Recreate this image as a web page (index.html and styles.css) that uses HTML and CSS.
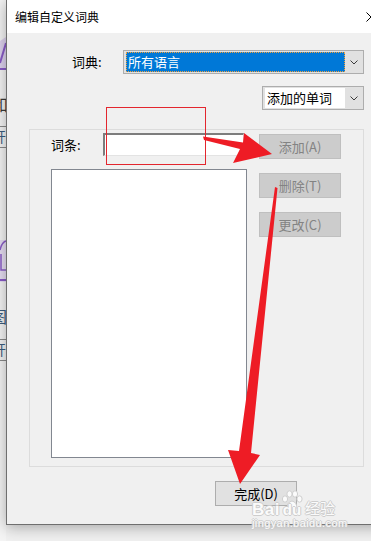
FILE: index.html
```html
<!DOCTYPE html>
<html lang="zh-CN">
<head>
  <meta charset="UTF-8">
  <meta name="viewport" content="width=device-width, initial-scale=1.0">
  <title>编辑自定义词典</title>
  <link rel="stylesheet" href="styles.css">
</head>
<body>
  <div class="page">
    <!-- 后面那个窗口露出来的一条 -->
    <div class="behind">
      <svg class="b-shape1" width="6" height="34" viewBox="0 0 6 34">
        <polygon points="0,4 6,0 6,32 0,32" fill="#ddd2ee"/>
        <path d="M0 26 L6 6" stroke="#8a5cc8" stroke-width="2"/>
        <path d="M0 32 H6" stroke="#8a5cc8" stroke-width="2"/>
      </svg>
      <div class="b-char b-he">和</div>
      <div class="b-rule"></div>
      <div class="b-char b-kai">开</div>
      <div class="b-rule"></div>
      <svg class="b-shape2" width="6" height="46" viewBox="0 0 6 46">
        <rect x="0" y="0" width="6" height="42" fill="#e6def2"/>
        <path d="M0 10 Q2 2 6 1" stroke="#8a5cc8" stroke-width="1.5" fill="none"/>
        <path d="M1 14 V30 H6" stroke="#8a5cc8" stroke-width="1.5" fill="none"/>
        <path d="M0 40 H6" stroke="#8a5cc8" stroke-width="2"/>
      </svg>
      <div class="b-char b-tu">图</div>
      <div class="b-rule b-rule2"></div>
      <div class="b-char b-kai">开</div>
      <div class="b-rule"></div>
    </div>

    <div class="dialog">
      <div class="titlebar">
        <span class="title">编辑自定义词典</span>
        <svg class="close" width="10" height="10" viewBox="0 0 10 10">
          <path d="M0.5 0.5 L9.5 9.5 M9.5 0.5 L0.5 9.5" stroke="#000" stroke-width="1"/>
        </svg>
      </div>

      <div class="content">
        <div class="row row-dict">
          <label class="lbl">词典:</label>
          <div class="combo combo-dict">
            <span class="combo-text selected">所有语言</span>
            <span class="combo-arrow">
              <svg width="8" height="5" viewBox="0 0 8 5"><path d="M0.5 0.5 L4 4 L7.5 0.5" stroke="#3c3c3c" fill="none"/></svg>
            </span>
          </div>
        </div>

        <div class="row row-filter">
          <div class="combo combo-filter">
            <span class="combo-text">添加的单词</span>
            <span class="combo-arrow">
              <svg width="8" height="5" viewBox="0 0 8 5"><path d="M0.5 0.5 L4 4 L7.5 0.5" stroke="#3c3c3c" fill="none"/></svg>
            </span>
          </div>
        </div>

        <div class="group">
          <div class="group-left">
            <div class="entry-row">
              <label class="lbl lbl-entry">词条:</label>
              <input class="entry" type="text">
            </div>
            <div class="listbox"></div>
          </div>
          <div class="group-buttons">
            <button class="btn" disabled>添加(A)</button>
            <button class="btn" disabled>删除(T)</button>
            <button class="btn" disabled>更改(C)</button>
          </div>
        </div>

        <div class="footer">
          <button class="btn btn-done">完成(D)</button>
        </div>
      </div>
    </div>

    <!-- 截图上画的红框和箭头 -->
    <svg class="marks" width="371" height="541" viewBox="0 0 371 541">
      <rect x="106.5" y="107.5" width="99" height="57" fill="none" stroke="#e3262e" stroke-width="1"/>
      <polygon points="203,136.5 243,142.5 244,133 272,154 233,163 240,149 204,140" fill="#ee1c25"/>
      <polygon points="275,187 277.5,188 251,453 260,455 240,484 228,450 239,451" fill="#ee1c25"/>
    </svg>

    <div class="watermark">
      <div class="wm-top">
        <span class="wm-bai">Bai</span>
        <span class="wm-paw">
          <svg width="24" height="20" viewBox="0 0 24 20">
            <g fill="#fbfbfb" stroke="#cfcfcf" stroke-width="1">
              <ellipse cx="5" cy="9" rx="2.6" ry="3.2"/>
              <ellipse cx="9.5" cy="4" rx="2.6" ry="3.2"/>
              <ellipse cx="15" cy="4" rx="2.6" ry="3.2"/>
              <ellipse cx="19.5" cy="9" rx="2.6" ry="3.2"/>
              <path d="M7 19 Q7 12 12 11 Q17 12 17 19"/>
            </g>
          </svg>
          <span class="wm-du">du</span>
        </span>
        <span class="wm-jy">经验</span>
      </div>
      <div class="wm-url">jingyan.baidu.com</div>
    </div>
  </div>
</body>
</html>
```

FILE: styles.css
```css
*{
  margin: 0;
  padding: 0;
  box-sizing: border-box;
}
body{
  font-family: "Noto Sans CJK SC", "Noto Sans", sans-serif;
  background: #f0f0f0;
}
.page{
  position: relative;
  display: flex;
  width: 371px;
  height: 541px;
  overflow: hidden;
  background: #f0f0f0;
}

/* 后面的窗口 */
.behind{
  width: 6px;
  flex-shrink: 0;
  overflow: hidden;
  background: #f4f4f4;
  display: flex;
  flex-direction: column;
}
.b-shape1{
  display: block;
  margin-top: 37px;
  flex-shrink: 0;
}
.b-char{
  width: 30px;
  font-size: 16px;
  line-height: 18px;
  color: #3a3a3a;
  flex-shrink: 0;
}
.b-he{
  margin-top: 24px;
  margin-left: -8px;
}
.b-kai{
  font-size: 14px;
  margin-left: -8px;
  color: #3d5d7e;
}
.b-tu{
  margin-top: 21px;
  margin-left: -9px;
  color: #3d5d7e;
}
.b-rule{
  height: 1px;
  flex-shrink: 0;
  background: #8a8a8a;
  margin-top: 2px;
}
.b-he + .b-rule{
  margin-top: 13px;
}
.b-shape2{
  display: block;
  margin-top: 92px;
  flex-shrink: 0;
}
.b-rule2{
  margin-top: 14px;
}

/* 对话框 */
.dialog{
  position: relative;
  z-index: 1;
  width: 380px;
  height: 525px;
  flex-shrink: 0;
  background: #f0f0f0;
  border-left: 1px solid #6f6f6f;
  border-bottom: 1px solid #6f6f6f;
  box-shadow: 0 2px 14px rgba(0,0,0,.32);
}
.titlebar{
  display: flex;
  align-items: center;
  height: 33px;
  padding-left: 8px;
  background: #fff;
}
.title{
  font-size: 12px;
  line-height: 16px;
  color: #000;
}
.close{
  display: block;
  margin-left: auto;
  margin-right: 10px;
  margin-top: 1px;
}

.content{
  display: flex;
  flex-direction: column;
  width: 335px;
  margin-left: 22px;
}
.row{
  display: flex;
  align-items: center;
}
.row-dict{
  margin-top: 17px;
}
.row-filter{
  margin-top: 12px;
}
.lbl{
  font-size: 13px;
  line-height: 18px;
  color: #000;
}
.row-dict .lbl{
  margin-left: 43px;
}

.combo{
  display: flex;
  height: 24px;
  margin-left: auto;
  padding: 1px 0 1px 2px;
  border: 1px solid #adadad;
  background: #e1e1e1;
}
.combo-dict{
  width: 241px;
}
.combo-filter{
  width: 102px;
}
.combo-text{
  flex: 1;
  font-size: 13px;
  line-height: 20px;
  padding-left: 2px;
  background: #fff;
  color: #000;
  white-space: nowrap;
}
.combo-text.selected{
  background: #0078d7;
  color: #fff;
  border: 1px dotted #f3a13a;
  line-height: 18px;
  padding-left: 1px;
}
.combo-arrow{
  width: 18px;
  display: flex;
  align-items: center;
  justify-content: center;
}
.combo-arrow svg{
  display: block;
}

/* 分组框 */
.group{
  display: flex;
  height: 338px;
  margin-top: 19px;
  border: 1px solid #dcdcdc;
  padding-left: 21px;
}
.group-left{
  display: flex;
  flex-direction: column;
  width: 196px;
  padding-top: 3px;
}
.entry-row{
  display: flex;
  align-items: center;
}
.lbl-entry{
  width: 52px;
}
.entry{
  width: 141px;
  height: 23px;
  background: #fff;
  border-top: 2px solid #7d7d7d;
  border-left: 2px solid #7d7d7d;
  border-right: 1px solid #e3e3e3;
  border-bottom: 1px solid #e3e3e3;
  outline: none;
}
.listbox{
  height: 289px;
  margin-top: 13px;
  background: #fff;
  border: 1px solid #828790;
}
.group-buttons{
  display: flex;
  flex-direction: column;
  gap: 14px;
  margin-left: 12px;
  padding-top: 4px;
}

.btn{
  width: 82px;
  height: 25px;
  font-family: "Noto Sans CJK SC", "Noto Sans", sans-serif;
  font-size: 13px;
  line-height: 16px;
  border: 1px solid #adadad;
  background: #e1e1e1;
  color: #000;
}
.btn:disabled{
  background: #cccccc;
  border-color: #bfbfbf;
  color: #838383;
}

.footer{
  display: flex;
  margin-top: 14px;
  padding-left: 186px;
}

/* 红色标注 */
.marks{
  position: absolute;
  left: 0;
  top: 0;
  z-index: 5;
  pointer-events: none;
}

/* 百度经验水印 */
.watermark{
  position: absolute;
  left: 252px;
  top: 484px;
  z-index: 6;
  color: #fbfbfb;
  text-shadow: 1px 0 #cdcdcd, -1px 0 #cdcdcd, 0 1px #cdcdcd, 0 -1px #cdcdcd;
  font-family: "Liberation Sans", sans-serif;
  pointer-events: none;
}
.wm-top{
  display: flex;
  align-items: flex-end;
  height: 32px;
}
.wm-bai{
  font-size: 17px;
  font-weight: bold;
  line-height: 13px;
  letter-spacing: 0.5px;
}
.wm-paw{
  display: flex;
  flex-direction: column;
  align-items: center;
  width: 24px;
}
.wm-paw svg{
  display: block;
}
.wm-du{
  font-size: 15px;
  font-weight: bold;
  line-height: 13px;
  margin-top: -7px;
}
.wm-jy{
  font-family: "Noto Sans CJK SC", sans-serif;
  font-size: 15px;
  line-height: 16px;
  margin-left: 1px;
}
.wm-url{
  font-size: 11px;
  line-height: 12px;
  letter-spacing: 0.4px;
  margin-top: 1px;
}
```
